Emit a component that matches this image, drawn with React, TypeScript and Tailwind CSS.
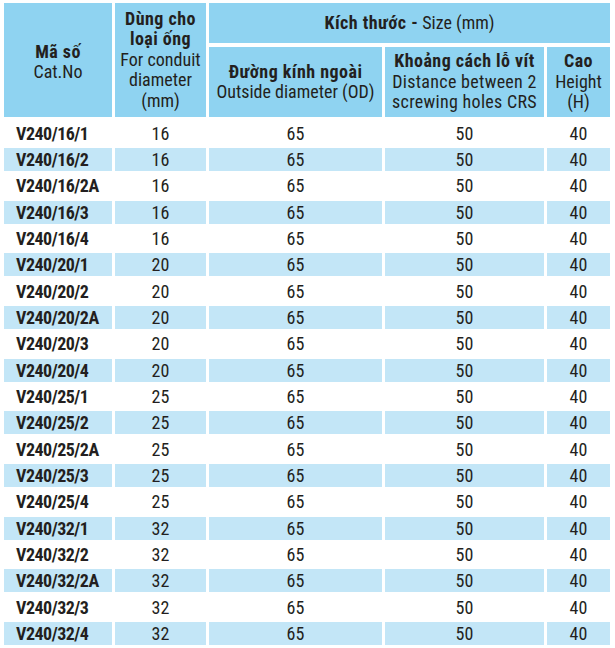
import React from 'react';

const rows: [string, string][] = [
    ['V240/16/1', '16'], ['V240/16/2', '16'], ['V240/16/2A', '16'], ['V240/16/3', '16'], ['V240/16/4', '16'],
    ['V240/20/1', '20'], ['V240/20/2', '20'], ['V240/20/2A', '20'], ['V240/20/3', '20'], ['V240/20/4', '20'],
    ['V240/25/1', '25'], ['V240/25/2', '25'], ['V240/25/2A', '25'], ['V240/25/3', '25'], ['V240/25/4', '25'],
    ['V240/32/1', '32'], ['V240/32/2', '32'], ['V240/32/2A', '32'], ['V240/32/3', '32'], ['V240/32/4', '32'],
];

const cols = 'grid grid-cols-[108px_91px_173px_159px_63px] gap-x-[3px]';
const hd = 'bg-[#8fd3f1] flex flex-col items-center justify-center text-center leading-[20.5px]';

export default function App() {
    return (
        <div className="w-[615px] h-[648px] bg-white pt-[3px] pl-[4px] text-[18px] text-[#231f20]"
            style={{ fontFamily: '"Liberation Sans Narrow", "Roboto Condensed", "Liberation Sans", sans-serif' }}>
            <div className={`${cols} grid-rows-[40px_70px] gap-y-[4px]`}>
                <div className={`${hd} row-span-2 pt-[4px]`}>
                    <b className="tracking-wide">Mã số</b>
                    <span>Cat.No</span>
                </div>
                <div className={`${hd} row-span-2`}>
                    <b className="tracking-wide">Dùng cho</b>
                    <b className="tracking-wide">loại ống</b>
                    <span>For conduit</span>
                    <span>diameter</span>
                    <span>(mm)</span>
                </div>
                <div className={`${hd} col-span-3`}>
                    <span><b className="tracking-wide">Kích thước -</b> Size (mm)</span>
                </div>
                <div className={hd}>
                    <b className="tracking-wide">Đường kính ngoài</b>
                    <span>Outside diameter (OD)</span>
                </div>
                <div className={hd}>
                    <b className="tracking-wide">Khoảng cách lỗ vít</b>
                    <span className="tracking-[0.3px]">Distance between 2</span>
                    <span className="tracking-[0.3px]">screwing holes CRS</span>
                </div>
                <div className={hd}>
                    <b className="tracking-wide">Cao</b>
                    <span>Height</span>
                    <span>(H)</span>
                </div>
            </div>
            <div className={`${cols} auto-rows-[23px] gap-y-[3.33px] mt-[4.67px]`}>
                {rows.map(([code, d], i) => {
                    const bg = i % 2 === 1 ? 'bg-[#c3e6f7]' : 'bg-white';
                    return (
                        <React.Fragment key={code}>
                            <div className={`${bg} flex items-center pl-[12px] font-bold tracking-[-0.5px]`}>{code}</div>
                            <div className={`${bg} flex items-center justify-center`}>{d}</div>
                            <div className={`${bg} flex items-center justify-center`}>65</div>
                            <div className={`${bg} flex items-center justify-center`}>50</div>
                            <div className={`${bg} flex items-center justify-center`}>40</div>
                        </React.Fragment>
                    );
                })}
            </div>
        </div>
    );
}
